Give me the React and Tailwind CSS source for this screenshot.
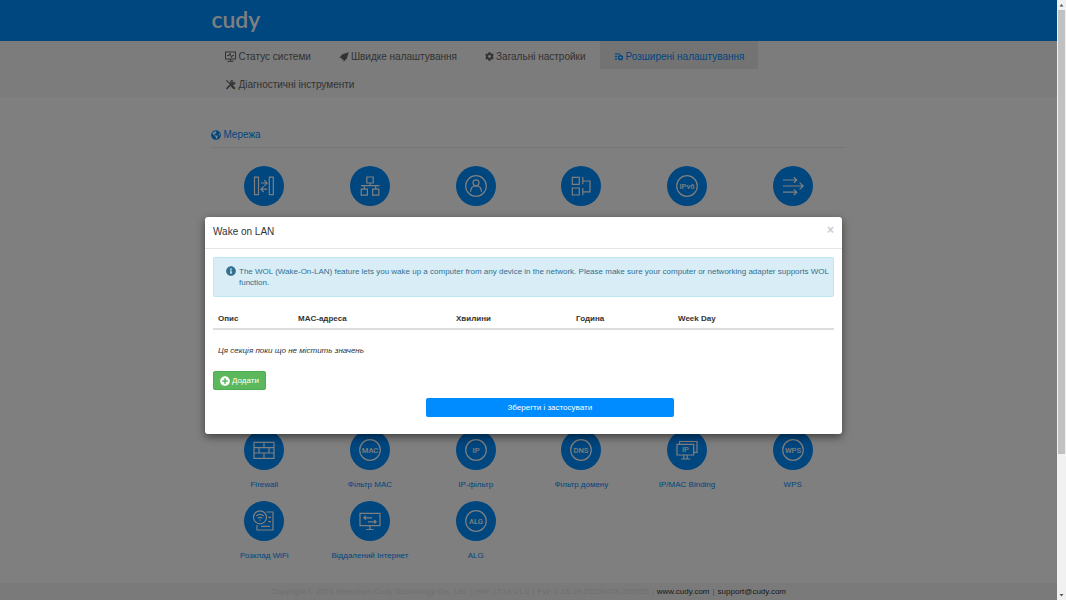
import React from "react";
import {
  FaCog,
  FaGlobeAmericas,
  FaInfoCircle,
  FaPlusCircle,
} from "react-icons/fa";

function StatusIcon() {
  return (
    <svg viewBox="0 0 11 11" className="size-[11px]" fill="none" stroke="currentColor" strokeWidth="1">
      <rect x="0.5" y="1" width="10" height="7" />
      <path d="M2 4.5h2l1-2 1.5 4 1-2H9M5.5 8v2M2.5 10.3h6" />
    </svg>
  );
}

function SendIcon() {
  return (
    <svg viewBox="0 0 11 11" className="size-[10px]" fill="currentColor">
      <path d="M10.8 0.4 3.6 2.6 0.4 6.2l2.8.3-.6 1.2.9.9 1.3-.6.3 2.7 3.4-3.3z" />
    </svg>
  );
}

function AdvancedIcon() {
  return (
    <svg viewBox="0 0 11 11" className="size-[10px]" fill="none" stroke="currentColor" strokeWidth="1.2">
      <path d="M1 2.2h6M1 4.8h2.5M1 7.6h2.5" />
      <circle cx="7.2" cy="6.2" r="2.1" strokeWidth="1.6" />
    </svg>
  );
}

function ToolsIcon() {
  return (
    <svg viewBox="0 0 11 11" className="size-[11px]" fill="none" stroke="currentColor" strokeLinecap="round">
      <path d="M2 9.4 8 3.2" strokeWidth="1.6" />
      <path d="M7.3 1.4a2 2 0 1 0 2.5 2.4" strokeWidth="1.4" />
      <path d="M1.6 1.6 5.4 5" strokeWidth="1.2" />
      <path d="M6.9 6.9 9.2 9.2" strokeWidth="2.2" />
    </svg>
  );
}

const navItems = [
  { label: "Статус системи", icon: <StatusIcon /> },
  { label: "Швидке налаштування", icon: <SendIcon /> },
  { label: "Загальні настройки", icon: <FaCog className="size-[9px]" /> },
  { label: "Розширені налаштування", icon: <AdvancedIcon />, active: true },
  { label: "Діагностичні інструменти", icon: <ToolsIcon /> },
];

function IconText({ x, y, children }) {
  return (
    <text
      x={x}
      y={y}
      textAnchor="middle"
      fontFamily="Roboto, sans-serif"
      fontSize="7.6"
      fontWeight="500"
      fill="currentColor"
      stroke="none"
    >
      {children}
    </text>
  );
}

function Ring({ text }) {
  return (
    <>
      <circle cx="20" cy="20" r="10.3" />
      <IconText x="20" y="22.8">
        {text}
      </IconText>
    </>
  );
}

const glyphs = {
  wan: (
    <path d="M10.5 11.2h4v17.5h-4zM25.3 11.2h4v17.5h-4zM16.8 17h6M20.3 14.2l2.8 2.8-2.8 2.8M23.2 23.2h-6M19.7 20.4l-2.8 2.8 2.8 2.8" />
  ),
  lan: (
    <path d="M16.8 11h6.4v6h-6.4zM11.2 23.2h6.2v6h-6.2zM22.6 23.2h6.2v6h-6.2zM20 17v2.7M11 19.7h18.4M14.3 19.7v3.5M25.7 19.7v3.5" />
  ),
  user: (
    <>
      <circle cx="20" cy="20" r="10.3" />
      <circle cx="20" cy="16.8" r="3" />
      <path d="M14.6 25.8c0-4 2-6 5.4-6s5.4 2 5.4 6" />
    </>
  ),
  vlan: (
    <path d="M11.3 11.3h7v7h-7zM11.3 22h7v7h-7zM21.8 11v7.3M21.8 22v7.3M21.8 15h7.2v10.8h-7.2" />
  ),
  routes: (
    <path d="M10 14h13.8M20.8 11.2l3 2.8-3 2.8M10 20h20M26.6 16.6l3.6 3.4-3.6 3.4M10 26.2h13.8M20.8 23.4l3 2.8-3 2.8" />
  ),
  firewall: (
    <path d="M10 12.3h20v16H10zM10 17.7h20M10 23h20M20 12.3v5.4M15 17.7V23M25 17.7V23M20 23v5.3" />
  ),
  binding: (
    <>
      <path d="M10 14.3h16.7V25H10zM12.6 14.3v-2.8H30v10.8h-3.3M16.8 25v3.8M20.2 25v3.8M14.2 29h9" />
      <IconText x="18.4" y="22.4">
        IP
      </IconText>
    </>
  ),
  wifi: (
    <>
      <circle cx="16" cy="16.3" r="6.5" />
      <path d="M12.2 15c2.3-2 5.3-2 7.6 0M13.8 17.2c1.4-1.2 3-1.2 4.4 0M15.4 19.2h1.2M22.5 11H29v18H13v-5M24.3 16.3H27M24.3 20.6H27M17 25.3h9" />
    </>
  ),
  remote: (
    <path d="M10 12.3h20v12.4H10zM20 24.7v3.6M16.4 28.5h7.2M14 16.8h8M15.8 15l-2 1.8 2 1.8M18 20.8h8M24.2 19l2 1.8-2 1.8" />
  ),
};

const networkTiles = [
  { name: "WAN", glyph: glyphs.wan },
  { name: "LAN", glyph: glyphs.lan },
  { name: "DHCP", glyph: glyphs.user },
  { name: "VLAN", glyph: glyphs.vlan },
  { name: "IPv6", glyph: <Ring text="IPv6" /> },
  { name: "Маршрути", glyph: glyphs.routes },
];

const securityTiles = [
  { name: "Firewall", glyph: glyphs.firewall },
  { name: "Фільтр MAC", glyph: <Ring text="MAC" /> },
  { name: "IP-фільтр", glyph: <Ring text="IP" /> },
  { name: "Фільтр домену", glyph: <Ring text="DNS" /> },
  { name: "IP/MAC Binding", glyph: glyphs.binding },
  { name: "WPS", glyph: <Ring text="WPS" /> },
  { name: "Розклад WiFi", glyph: glyphs.wifi },
  { name: "Віддалений Інтернет", glyph: glyphs.remote },
  { name: "ALG", glyph: <Ring text="ALG" /> },
];

function TileGrid({ tiles }) {
  return (
    <div className="grid grid-cols-6 gap-y-3">
      {tiles.map((tile) => (
        <a key={tile.name} href="#" className="flex flex-col items-center gap-[11px] text-[8px] leading-2 text-[#008cff]">
          <span className="flex size-10 items-center justify-center rounded-full bg-[#008cff] text-white">
            <svg viewBox="0 0 40 40" className="size-10" fill="none" stroke="currentColor" strokeWidth="1.2">
              {tile.glyph}
            </svg>
          </span>
          <span>{tile.name}</span>
        </a>
      ))}
    </div>
  );
}

function WakeOnLanDialog() {
  return (
    <div className="absolute inset-0 bg-black/50 pt-[217px] pr-[10px]">
      <section
        role="dialog"
        aria-modal="true"
        aria-labelledby="dialog-title"
        className="mx-auto w-[637px] max-w-full rounded-[3px] bg-white text-[8px] leading-[11px] text-[#333] shadow-[0_3px_9px_rgba(0,0,0,0.5)]"
      >
        <header className="flex h-8 items-start justify-between border-b border-[#e5e5e5] px-2 pt-2">
          <h1 id="dialog-title" className="text-[10px] leading-[14px]">
            Wake on LAN
          </h1>
          <button type="button" aria-label="Close" className="text-[12px] leading-[11px] font-bold text-[#ccc]">
            ×
          </button>
        </header>
        <div className="px-2 pt-2 pb-[17px]">
          <div className="flex gap-[3px] rounded-[2px] border border-[#bce8f1] bg-[#d9edf7] py-2 pr-0.5 pl-3 text-[#31708f]">
            <FaInfoCircle className="size-[10px] shrink-0" />
            <p>
              The WOL (Wake-On-LAN) feature lets you wake up a computer from any device in the network. Please make sure
              your computer or networking adapter supports WOL function.
            </p>
          </div>
          <table className="mt-3 w-full table-fixed text-left">
            <thead>
              <tr className="h-5 border-b-2 border-[#ddd]">
                <th className="w-20 px-[5px]">Опис</th>
                <th className="w-[158px] px-[5px]">MAC-адреса</th>
                <th className="w-30 px-[5px]">Хвилини</th>
                <th className="w-[102px] px-[5px]">Година</th>
                <th className="px-[5px]">Week Day</th>
              </tr>
            </thead>
            <tbody>
              <tr className="h-[42px]">
                <td colSpan={5} className="px-[5px] italic">
                  Ця секція поки що не містить значень
                </td>
              </tr>
            </tbody>
          </table>
          <button
            type="button"
            className="flex h-[19px] items-center gap-0.5 rounded-[2px] border border-[#4cae4c] bg-[#5cb85c] px-1.5 text-white"
          >
            <FaPlusCircle className="size-[10px]" />
            Додати
          </button>
          <button
            type="button"
            className="mt-2 mr-40 ml-auto block h-[19px] w-2/5 rounded-[2px] bg-[#008cff] text-white"
          >
            Зберегти і застосувати
          </button>
        </div>
      </section>
    </div>
  );
}

function ScrollTrack() {
  return (
    <div aria-hidden="true" className="flex w-[9px] shrink-0 flex-col items-center bg-[#f1f1f1]">
      <svg viewBox="0 0 9 10" className="h-[10px] w-[9px]" fill="#555">
        <path d="M2.5 6.5 4.5 4l2 2.5z" />
      </svg>
      <div className="h-[74%] w-[7px] bg-[#c1c1c1]" />
      <svg viewBox="0 0 9 10" className="mt-auto h-[10px] w-[9px]" fill="#555">
        <path d="M2.5 4 4.5 6.5l2-2.5z" />
      </svg>
    </div>
  );
}

export default function App() {
  return (
    <div className="flex h-screen overflow-hidden font-['Liberation_Sans',Arial,sans-serif]">
      <div className="relative flex min-w-0 flex-1 flex-col bg-white">
        <header className="bg-[#008cff]">
          <div className="mx-auto flex h-[41px] w-3/5 items-center">
            <a href="#" className="pb-1 font-['Lato',sans-serif] text-[23px] leading-6 font-semibold text-white">
              cudy
            </a>
          </div>
        </header>
        <nav className="bg-[#f8f8f8]">
          <div className="mx-auto flex w-3/5 flex-wrap">
            {navItems.map((item) => (
              <a
                key={item.label}
                href="#"
                className={
                  item.active
                    ? "flex h-7 items-center gap-0.5 bg-[#e7e7e7] px-3.5 pt-[3px] text-[10px] leading-[14px] text-[#008cff]"
                    : "flex h-7 items-center gap-0.5 px-3.5 pt-[3px] text-[10px] leading-[14px] text-[#666]"
                }
              >
                {item.icon}
                {item.label}
              </a>
            ))}
          </div>
        </nav>
        <main className="mx-auto w-3/5 flex-1 pt-[31px]">
          <section className="min-h-[264px]">
            <h2 className="mb-[18px] flex h-5 items-start gap-0.5 border-b border-[#eee] text-[10px] leading-[14px] text-[#008cff]">
              <FaGlobeAmericas className="mt-0.5 size-[10px]" />
              Мережа
            </h2>
            <TileGrid tiles={networkTiles} />
          </section>
          <section className="pt-[38px]">
            <TileGrid tiles={securityTiles} />
          </section>
        </main>
        <footer className="flex h-[17px] items-center justify-center gap-[3px] bg-[#f5f5f5] text-[8px] text-[#ddd]">
          <span>Copyright © 2023 Shenzhen Cudy Technology Co., Ltd.</span>
          <span>|</span>
          <span>HW: LT18 V1.0</span>
          <span>|</span>
          <span>FW: 1.16.19-20230418-150855</span>
          <span>|</span>
          <a href="#" className="text-[#333]">
            www.cudy.com
          </a>
          <span className="text-[#999]">|</span>
          <a href="#" className="text-[#333]">
            support@cudy.com
          </a>
        </footer>
        <WakeOnLanDialog />
      </div>
      <ScrollTrack />
    </div>
  );
}
